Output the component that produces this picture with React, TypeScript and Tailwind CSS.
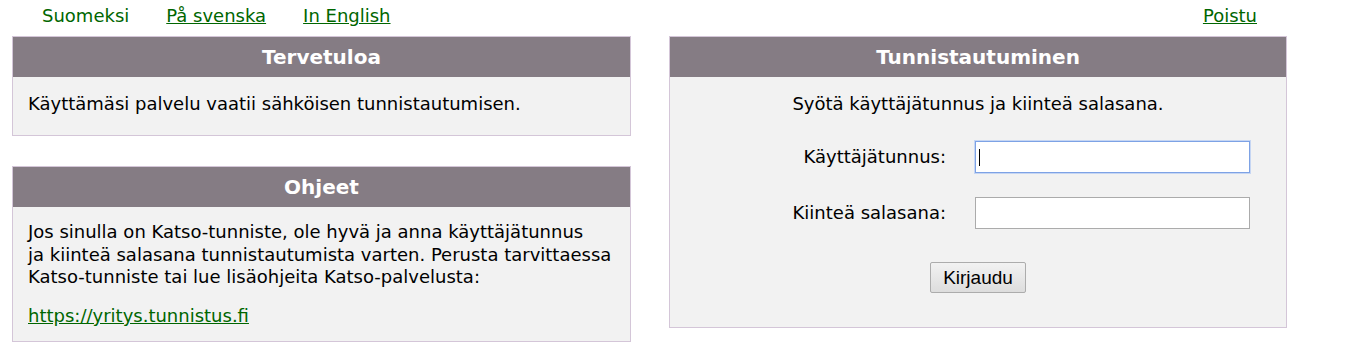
const font = { fontFamily: '"DejaVu Sans", Verdana, sans-serif' };

function Panel({ title, children }: { title: string; children: React.ReactNode }) {
  return (
    <div className="border border-[#d4c6d8] bg-[#f2f2f2]">
      <div className="flex h-[40px] items-center justify-center bg-[#857c84] text-[20px] font-bold text-white">
        {title}
      </div>
      {children}
    </div>
  );
}

export default function App() {
  return (
    <div className="h-[359px] w-[1355px] bg-white text-[18px] leading-[22px] text-black" style={font}>
      <div className="flex h-[36px] w-[1287px] justify-between pt-[5px] pl-[42px] pr-[30px]">
        <div className="flex gap-[37px]">
          <span className="text-[#006600]">Suomeksi</span>
          <a href="#" className="text-[#006600] underline">På svenska</a>
          <a href="#" className="text-[#006600] underline">In English</a>
        </div>
        <a href="#" className="text-[#006600] underline">Poistu</a>
      </div>

      <div className="flex gap-[38px] pl-[12px]">
        <div className="flex w-[619px] flex-col gap-[30px]">
          <Panel title="Tervetuloa">
            <div className="px-[15px] pt-[16px] pb-[20px]">
              Käyttämäsi palvelu vaatii sähköisen tunnistautumisen.
            </div>
          </Panel>
          <Panel title="Ohjeet">
            <div className="px-[15px] pt-[14px] pb-[14px]">
              <p className="mb-[16px] leading-[22.5px]">
                Jos sinulla on Katso-tunniste, ole hyvä ja anna käyttäjätunnus
                <br />
                ja kiinteä salasana tunnistautumista varten. Perusta tarvittaessa
                <br />
                Katso-tunniste tai lue lisäohjeita Katso-palvelusta:
              </p>
              <a href="#" className="text-[#006600] underline">https://yritys.tunnistus.fi</a>
            </div>
          </Panel>
        </div>

        <div className="w-[618px]">
          <Panel title="Tunnistautuminen">
            <div className="flex flex-col pt-[16px] pb-[34px]">
              <div className="text-center">Syötä käyttäjätunnus ja kiinteä salasana.</div>
              <div className="mt-[26px] flex items-center">
                <label className="w-[276px] text-right">Käyttäjätunnus:</label>
                <div className="relative ml-[29px]">
                  <input
                    autoFocus
                    className="h-[32px] w-[275px] border border-[#7da2e5] bg-white px-[4px] shadow-[0_0_0_1px_#c6d6f3] outline-none caret-transparent"
                  />
                  <span className="absolute top-[8px] left-[4px] h-[17px] w-[1px] bg-black" />
                </div>
              </div>
              <div className="mt-[24px] flex items-center">
                <label className="w-[276px] text-right">Kiinteä salasana:</label>
                <input
                  type="password"
                  className="ml-[29px] h-[32px] w-[275px] border border-[#ababab] bg-white px-[4px] outline-none"
                />
              </div>
              <div className="mt-[33px] flex justify-center">
                <button
                  className="h-[31px] w-[96px] rounded-[2px] border border-[#acacac] bg-gradient-to-b from-[#f2f2f2] to-[#dddddd] text-[19px]"
                  style={{ fontFamily: '"Liberation Sans", Arial, sans-serif' }}
                >
                  Kirjaudu
                </button>
              </div>
            </div>
          </Panel>
        </div>
      </div>
    </div>
  );
}
